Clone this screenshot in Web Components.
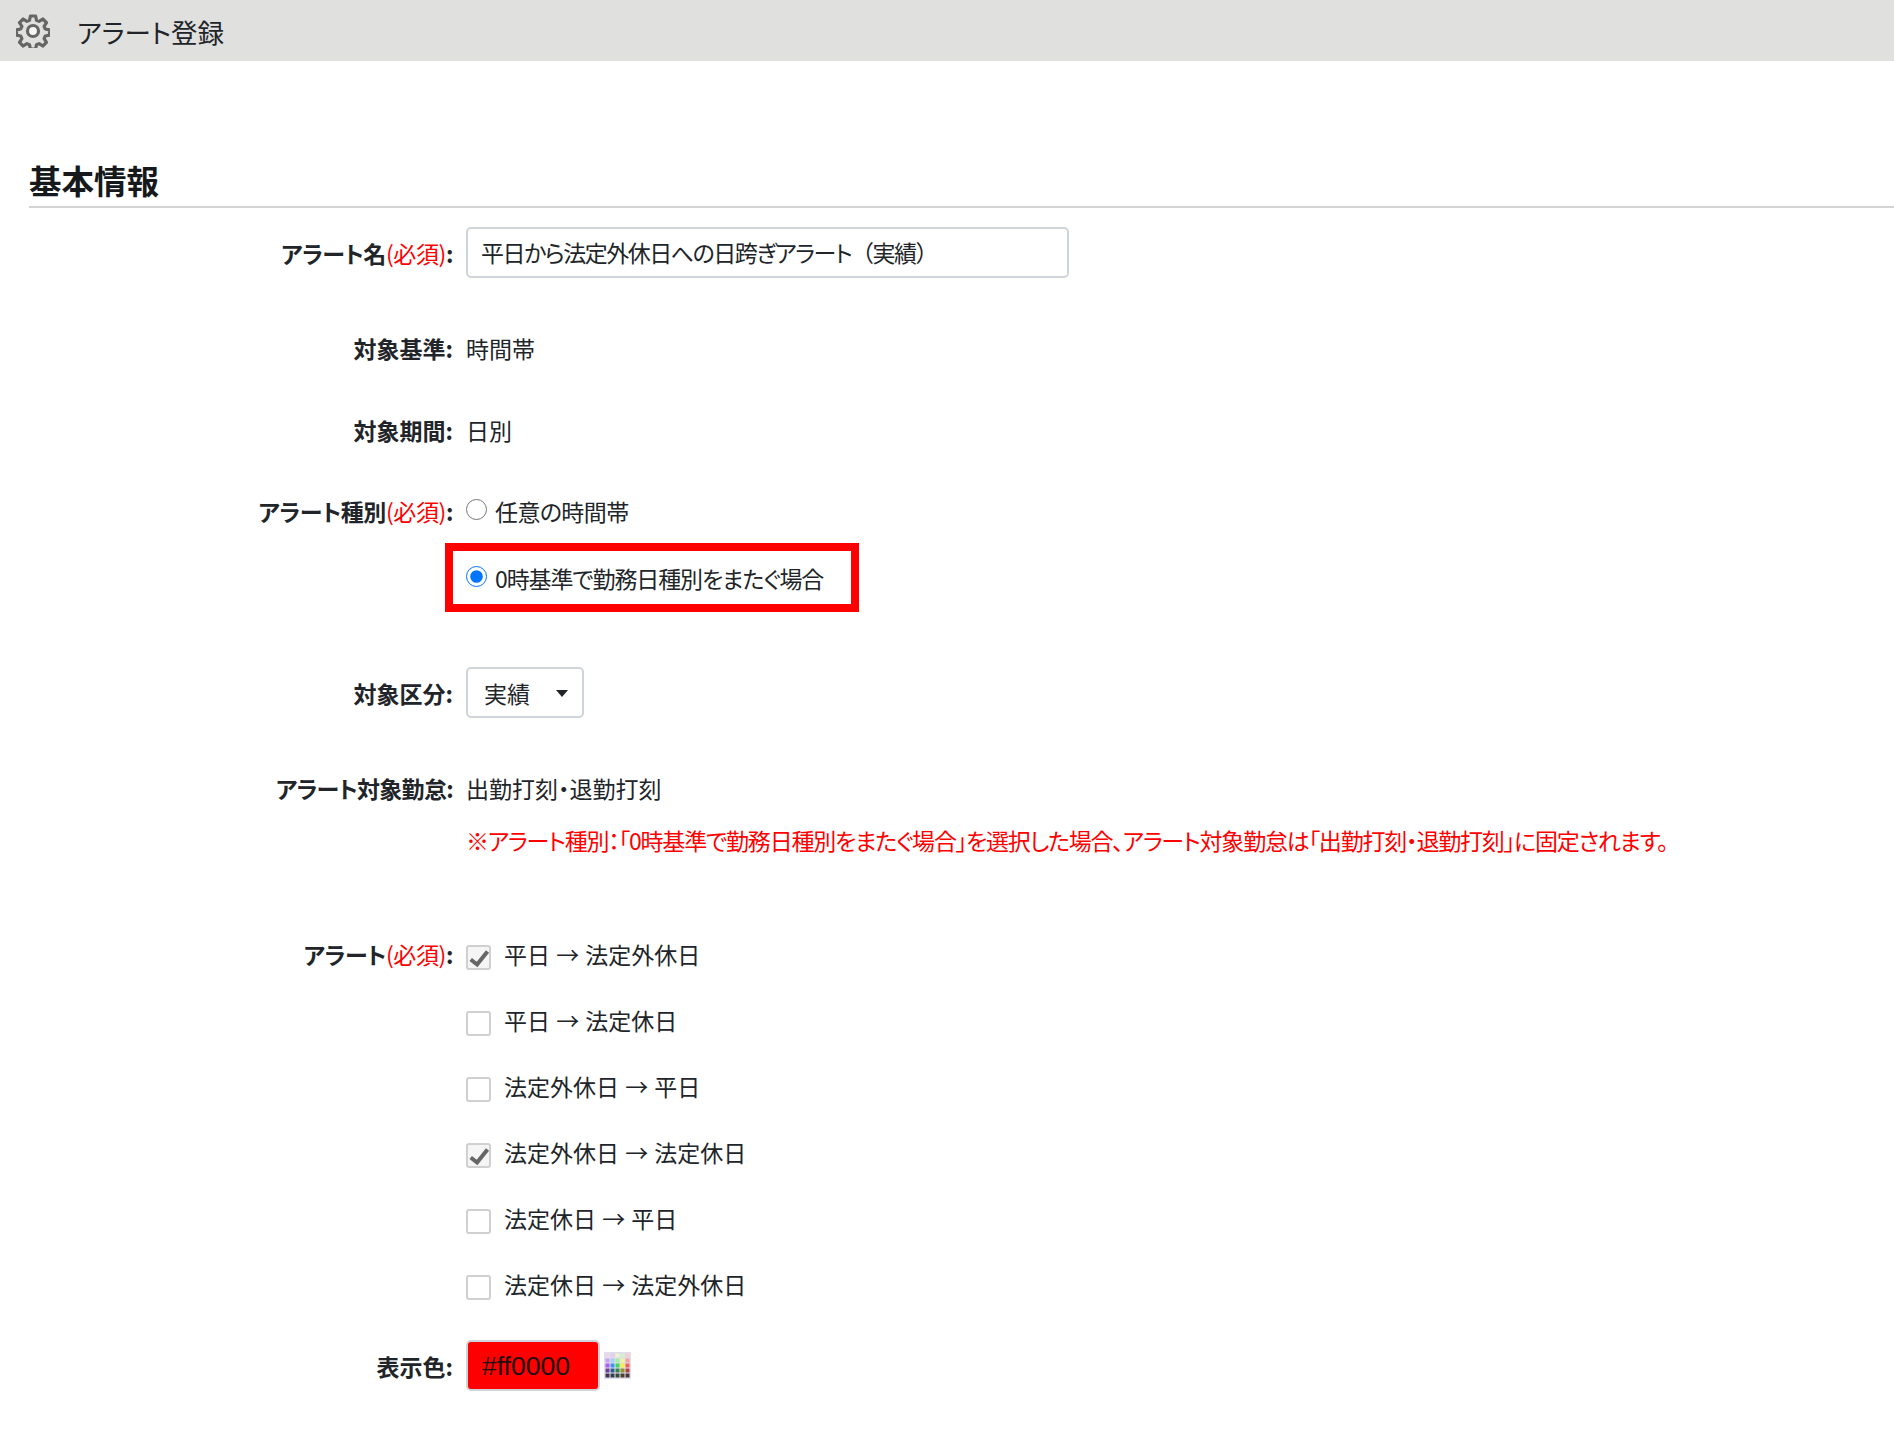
<!DOCTYPE html>
<html lang="ja">
<head>
<meta charset="utf-8">
<title>アラート登録</title>
<style>
  html, body { margin: 0; background: #fff; }
  body {
    font-family: "Noto Sans CJK JP", "Liberation Sans", sans-serif;
    font-feature-settings: "palt";
    font-size: 23px;
    color: #212529;
  }
</style>
</head>
<body>
<app-header>アラート登録</app-header>
<alert-form></alert-form>

<template id="form-tpl">
  <style>
    :host { display: block; padding: 0 0 60px 29px; }
    .rows { display: flex; flex-direction: column; }
    .note { color: #f00; letter-spacing: -1.19px; line-height: 30px; white-space: nowrap; }
    .checks { display: flex; flex-direction: column; gap: 36px; }
    .wide { font-feature-settings: normal; }
  </style>
  <section-heading>基本情報</section-heading>
  <div class="rows">
    <form-row label="アラート名" required style="height:51px;margin-top:19px">
      <text-box width="603">平日から法定外休日への日跨ぎアラート<span class="wide">（</span>実績<span class="wide">）</span></text-box>
    </form-row>
    <form-row label="対象基準" style="height:30px;margin-top:55px">時間帯</form-row>
    <form-row label="対象期間" style="height:30px;margin-top:52px">日別</form-row>
    <form-row label="アラート種別" required style="height:30px;margin-top:51px">
      <radio-option>任意の時間帯</radio-option>
    </form-row>
    <form-row style="height:30px;margin-top:37px">
      <radio-option checked highlight>0時基準で勤務日種別をまたぐ場合</radio-option>
    </form-row>
    <form-row label="対象区分" style="height:51px;margin-top:74px">
      <select-box>実績</select-box>
    </form-row>
    <form-row label="アラート対象勤怠" style="height:30px;margin-top:55px">出勤打刻・退勤打刻</form-row>
    <form-row style="height:30px;margin-top:22px">
      <span class="note">※アラート種別：「0時基準で勤務日種別をまたぐ場合」を選択した場合、アラート対象勤怠は「出勤打刻・退勤打刻」に固定されます。</span>
    </form-row>
    <form-row label="アラート" required style="margin-top:84px">
      <div class="checks">
        <check-option checked>平日 → 法定外休日</check-option>
        <check-option>平日 → 法定休日</check-option>
        <check-option>法定外休日 → 平日</check-option>
        <check-option checked>法定外休日 → 法定休日</check-option>
        <check-option>法定休日 → 平日</check-option>
        <check-option>法定休日 → 法定外休日</check-option>
      </div>
    </form-row>
    <form-row label="表示色" style="height:51px;margin-top:41px">
      <color-field>#ff0000</color-field>
    </form-row>
  </div>
</template>

<script>
class AppHeader extends HTMLElement {
  constructor() {
    super();
    this.attachShadow({mode: "open"});
    this.shadowRoot.innerHTML = `
      <style>
        :host { display: flex; align-items: center; height: 61px; background: #e0e0de; padding-left: 16px; box-sizing: border-box; }
        svg { width: 34px; height: 34px; flex: none; }
        span { margin-left: 27px; font-size: 26.5px; line-height: 61px; color: #212529; position: relative; top: 1px; }
      </style>
      <svg viewBox="0 0 34 34" fill="none" stroke="#666" stroke-width="3.2" stroke-linejoin="round">
        <path d="M14.4 2h5.2l.9 4.3 2.6 1.1 3.7-2.4 3.7 3.7-2.4 3.7 1.1 2.6 4.3.9v5.2l-4.3.9-1.1 2.6 2.4 3.7-3.7 3.7-3.7-2.4-2.6 1.1-.9 4.3h-5.2l-.9-4.3-2.6-1.1-3.7 2.4-3.7-3.7 2.4-3.7-1.1-2.6-4.3-.9v-5.2l4.3-.9 1.1-2.6-2.4-3.7 3.7-3.7 3.7 2.4 2.6-1.1z"/>
        <circle cx="17" cy="17" r="5.5" fill="#f6f6f6"/>
      </svg>
      <span><slot></slot></span>`;
  }
}
customElements.define("app-header", AppHeader);

class SectionHeading extends HTMLElement {
  constructor() {
    super();
    this.attachShadow({mode: "open"});
    this.shadowRoot.innerHTML = `
      <style>
        :host { display: block; margin-top: 94px; border-bottom: 2px solid #d4d4d4; height: 51px; box-sizing: content-box; font-size: 32.5px; font-weight: 700; line-height: 50px; color: #15191c; }
      </style>
      <slot></slot>`;
  }
}
customElements.define("section-heading", SectionHeading);

class FormRow extends HTMLElement {
  constructor() {
    super();
    this.attachShadow({mode: "open"});
    const label = this.getAttribute("label");
    const req = this.hasAttribute("required") ? `<span class="req">(必須)</span>` : "";
    this.shadowRoot.innerHTML = `
      <style>
        :host { display: flex; align-items: stretch; line-height: 30px; }
        :host([required]) .label { letter-spacing: -.4px; }
        .label { width: 424px; flex: none; font-weight: 700; white-space: nowrap; display: flex; align-items: center; justify-content: flex-end; }
        .req { color: #f00; font-weight: 400; }
        .body { margin-left: 13px; display: flex; align-items: center; white-space: nowrap; }
        :host([label="アラート"]) .label { height: 30px; }
        :host([label="アラート対象勤怠"]) .label { letter-spacing: -.7px; }
      </style>
      <div class="label">${label ? `<span>${label}${req}:</span>` : ""}</div>
      <div class="body"><slot></slot></div>`;
  }
}
customElements.define("form-row", FormRow);

class TextBox extends HTMLElement {
  constructor() {
    super();
    this.attachShadow({mode: "open"});
    this.shadowRoot.innerHTML = `
      <style>
        :host { display: block; box-sizing: border-box; height: 51px; width: ${this.getAttribute("width") || 300}px; border: 2px solid #ced4da; border-radius: 5px; padding: 0 13px; line-height: 47px; background: #fff; letter-spacing: -1.5px; }
      </style>
      <slot></slot>`;
  }
}
customElements.define("text-box", TextBox);

class SelectBox extends HTMLElement {
  constructor() {
    super();
    this.attachShadow({mode: "open"});
    this.shadowRoot.innerHTML = `
      <style>
        :host { display: flex; align-items: center; box-sizing: border-box; height: 51px; width: 118px; border: 2px solid #ced4da; border-radius: 5px; padding-left: 16px; background: #fff; position: relative; }
        i { position: absolute; right: 14px; top: 21px; width: 0; height: 0; border: 6.5px solid transparent; border-top: 7px solid #212529; border-bottom: 0; }
      </style>
      <slot></slot><i></i>`;
  }
}
customElements.define("select-box", SelectBox);

class RadioOption extends HTMLElement {
  constructor() {
    super();
    this.attachShadow({mode: "open"});
    const on = this.hasAttribute("checked");
    this.shadowRoot.innerHTML = `
      <style>
        :host { display: flex; align-items: center; position: relative; letter-spacing: -.6px; }
        :host([highlight]) { letter-spacing: -1.1px; }
        input { width: 21px; height: 21px; margin: -3px 8px 0 0; accent-color: #0075ff; flex: none; }
        :host([highlight])::after { content: ""; position: absolute; left: -21px; right: -36px; top: -20px; bottom: -19px; border: 8px solid #f00; pointer-events: none; }
      </style>
      <input type="radio" ${on ? "checked" : ""}><slot></slot>`;
  }
}
customElements.define("radio-option", RadioOption);

class CheckOption extends HTMLElement {
  constructor() {
    super();
    this.attachShadow({mode: "open"});
    const on = this.hasAttribute("checked");
    this.shadowRoot.innerHTML = `
      <style>
        :host { display: flex; align-items: center; height: 30px; word-spacing: 1px; }
        .box { width: 25px; height: 25px; box-sizing: border-box; margin: 6px 13px 0 0; border: 2px solid #d0d0d0; border-radius: 3px; background: #fff; flex: none; }
        :host([checked]) .box { background: #f5f5f5; }
        svg { display: block; width: 21px; height: 21px; overflow: visible; }
      </style>
      <span class="box">${on ? `<svg viewBox="0 0 21 21"><path d="M2.7 12.5l6.4 5L19.5 4.5" fill="none" stroke="#666" stroke-width="4"/></svg>` : ""}</span>
      <slot></slot>`;
  }
}
customElements.define("check-option", CheckOption);

class ColorField extends HTMLElement {
  constructor() {
    super();
    this.attachShadow({mode: "open"});
    const cols = ["#e8d0e8","#d8c8f0","#f0f0c8","#c8f0c8","#f0c8c8","#c090f0","#90c8f0","#90f090","#f0f090","#f09090","#a040f0","#2080f0","#20d040","#f0f020","#f04040","#502080","#104080","#107030","#808010","#a02020","#201030","#102030","#103010","#302010","#301010"];
    let cells = "";
    cols.forEach((c, i) => {
      cells += `<rect x="${1.5 + (i % 5) * 5}" y="${1.5 + Math.floor(i / 5) * 5}" width="4" height="4" fill="${c}"/>`;
    });
    this.shadowRoot.innerHTML = `
      <style>
        :host { display: flex; align-items: center; }
        .swatch { box-sizing: border-box; width: 134px; height: 51px; background: #f00; border: 2px solid #ced4da; border-radius: 5px; padding-left: 14px; line-height: 48px; font-size: 26.5px; font-family: "Liberation Sans", sans-serif; color: #1c1010; }
        svg { width: 27px; height: 27px; margin-left: 4px; opacity: .85; }
      </style>
      <div class="swatch"><slot></slot></div>
      <svg viewBox="0 0 27 27"><rect width="27" height="27" fill="#dcd8e8"/>${cells}</svg>`;
  }
}
customElements.define("color-field", ColorField);

class AlertForm extends HTMLElement {
  constructor() {
    super();
    this.attachShadow({mode: "open"});
    this.shadowRoot.appendChild(document.getElementById("form-tpl").content.cloneNode(true));
  }
}
customElements.define("alert-form", AlertForm);
</script>
</body>
</html>
